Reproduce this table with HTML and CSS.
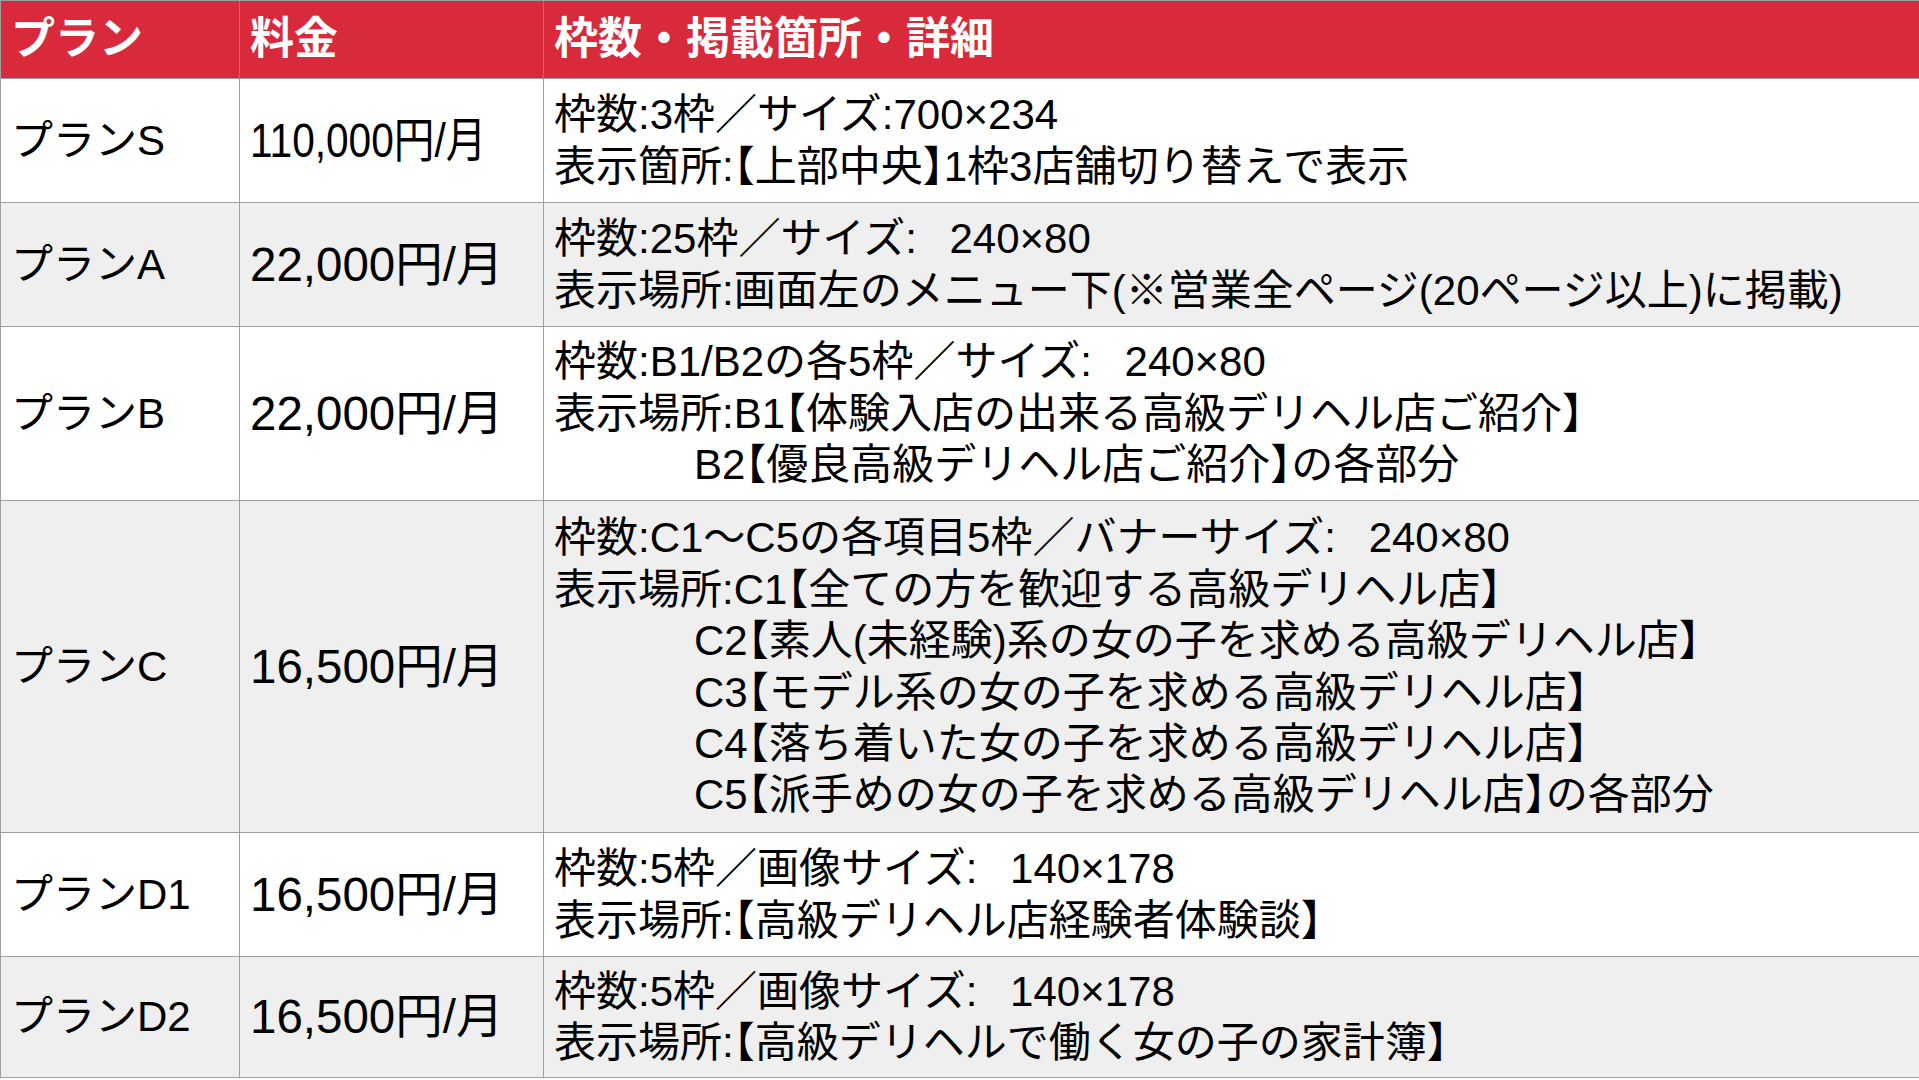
FILE: index.html
```html
<!DOCTYPE html>
<html lang="ja">
<head>
<meta charset="utf-8">
<title>プラン料金表</title>
<link rel="stylesheet" href="styles.css">
</head>
<body>
<div class="plan-table">
  <div class="cell head">プラン</div>
  <div class="cell head">料金</div>
  <div class="cell head detail">枠数・掲載箇所・詳細</div>

  <div class="cell">プランS</div>
  <div class="cell price"><span class="squeeze">110,000円/月</span></div>
  <div class="cell detail">
    <div>枠数:3枠／サイズ:700×234</div>
    <div>表示箇所:【上部中央】1枠3店舗切り替えで表示</div>
  </div>

  <div class="cell alt">プランA</div>
  <div class="cell alt price">22,000円/月</div>
  <div class="cell alt detail">
    <div>枠数:25枠／サイズ:&#8194; 240×80</div>
    <div>表示場所:画面左のメニュー下(※営業全ページ(20ページ以上)に掲載)</div>
  </div>

  <div class="cell">プランB</div>
  <div class="cell price">22,000円/月</div>
  <div class="cell detail">
    <div>枠数:B1/B2の各5枠／サイズ:&#8194; 240×80</div>
    <div>表示場所:B1【体験入店の出来る高級デリヘル店ご紹介】</div>
    <div class="indent">B2【優良高級デリヘル店ご紹介】の各部分</div>
  </div>

  <div class="cell alt">プランC</div>
  <div class="cell alt price">16,500円/月</div>
  <div class="cell alt detail">
    <div>枠数:C1～C5の各項目5枠／バナーサイズ:&#8194; 240×80</div>
    <div>表示場所:C1【全ての方を歓迎する高級デリヘル店】</div>
    <div class="indent">C2【素人(未経験)系の女の子を求める高級デリヘル店】</div>
    <div class="indent">C3【モデル系の女の子を求める高級デリヘル店】</div>
    <div class="indent">C4【落ち着いた女の子を求める高級デリヘル店】</div>
    <div class="indent">C5【派手めの女の子を求める高級デリヘル店】の各部分</div>
  </div>

  <div class="cell">プランD1</div>
  <div class="cell price">16,500円/月</div>
  <div class="cell detail">
    <div>枠数:5枠／画像サイズ:&#8194; 140×178</div>
    <div>表示場所:【高級デリヘル店経験者体験談】</div>
  </div>

  <div class="cell alt">プランD2</div>
  <div class="cell alt price">16,500円/月</div>
  <div class="cell alt detail">
    <div>枠数:5枠／画像サイズ:&#8194; 140×178</div>
    <div>表示場所:【高級デリヘルで働く女の子の家計簿】</div>
  </div>
</div>
</body>
</html>
```
FILE: styles.css
```css
html, body {
  margin: 0;
  padding: 0;
  background: #ffffff;
}

body {
  font-family: "Liberation Sans", "Noto Sans CJK JP", sans-serif;
  color: #000000;
}

.plan-table {
  width: 1919px;
  display: grid;
  grid-template-columns: 239px 304px 1fr;
  grid-template-rows: 78px 124px 124px 174px 332px 124px 121px;
  border-top: 1px solid #9e9e9e;
  border-left: 1px solid #9e9e9e;
  box-sizing: border-box;
}

.cell {
  display: flex;
  flex-direction: column;
  justify-content: center;
  padding: 0 10px;
  border-right: 1px solid #9e9e9e;
  border-bottom: 1px solid #9e9e9e;
  font-size: 42px;
  line-height: 51.4px;
  font-feature-settings: "halt";
  white-space: nowrap;
  overflow: hidden;
}

.cell.price {
  font-size: 47.5px;
}

.squeeze {
  display: inline-block;
  transform: scaleX(0.855);
  transform-origin: left center;
}

.cell.detail {
  border-right: none;
}

.cell.alt {
  background: #efefef;
}

.cell.head {
  background: #d92a3b;
  color: #ffffff;
  font-weight: 700;
  font-size: 44px;
  line-height: 1;
  font-feature-settings: normal;
  border-right-color: #c86a73;
  border-bottom-color: #9e9e9e;
  padding-bottom: 2px;
}

.cell.head.detail {
  border-right: none;
}

.indent {
  padding-left: 140px;
}
```
